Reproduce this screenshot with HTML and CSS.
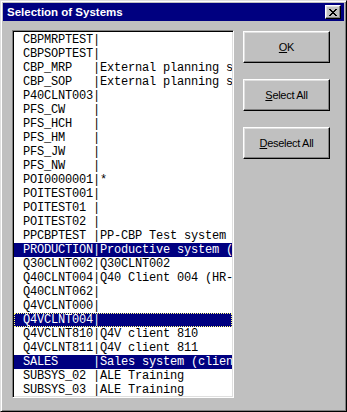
FILE: index.html
```html
<!DOCTYPE html>
<html>
<head>
<meta charset="utf-8">
<link rel="stylesheet" href="styles.css">
</head>
<body>
<div class="window">
  <div class="titlebar">
    <span class="title">Selection of Systems</span>
    <span class="close">
      <svg width="8" height="7" viewBox="0 0 8 7" shape-rendering="crispEdges">
        <path d="M0 0h2v1h-2z M6 0h2v1h-2z M1 1h2v1h-2z M5 1h2v1h-2z M2 2h4v1h-4z M3 3h2v1h-2z M2 4h4v1h-4z M1 5h2v1h-2z M5 5h2v1h-2z M0 6h2v1h-2z M6 6h2v1h-2z" fill="#000"/>
      </svg>
    </span>
  </div>
  <div class="content">
    <div class="listbox">
      <div class="row">CBPMRPTEST|</div>
      <div class="row">CBPSOPTEST|</div>
      <div class="row">CBP_MRP   |External planning system</div>
      <div class="row">CBP_SOP   |External planning system</div>
      <div class="row">P40CLNT003|</div>
      <div class="row">PFS_CW    |</div>
      <div class="row">PFS_HCH   |</div>
      <div class="row">PFS_HM    |</div>
      <div class="row">PFS_JW    |</div>
      <div class="row">PFS_NW    |</div>
      <div class="row">POI0000001|*</div>
      <div class="row">POITEST001|</div>
      <div class="row">POITEST01 |</div>
      <div class="row">POITEST02 |</div>
      <div class="row">PPCBPTEST |PP-CBP Test system</div>
      <div class="row sel">PRODUCTION|Productive system (client)</div>
      <div class="row">Q30CLNT002|Q30CLNT002</div>
      <div class="row">Q40CLNT004|Q40 Client 004 (HR-Test)</div>
      <div class="row">Q40CLNT062|</div>
      <div class="row">Q4VCLNT000|</div>
      <div class="row sel focus">Q4VCLNT004|</div>
      <div class="row">Q4VCLNT810|Q4V client 810</div>
      <div class="row">Q4VCLNT811|Q4V client 811</div>
      <div class="row sel">SALES     |Sales system (client)</div>
      <div class="row">SUBSYS_02 |ALE Training</div>
      <div class="row">SUBSYS_03 |ALE Training</div>
    </div>
    <div class="buttons">
      <div class="btn"><span><u>O</u>K</span></div>
      <div class="btn"><span><u>S</u>elect All</span></div>
      <div class="btn"><span><u>D</u>eselect All</span></div>
    </div>
  </div>
</div>
</body>
</html>
```
FILE: styles.css
```css
html, body {
  margin: 0;
  padding: 0;
  background: #c0c0c0;
}

.window {
  box-sizing: border-box;
  width: 347px;
  height: 412px;
  background: #c0c0c0;
  border: 1px solid;
  border-color: #dfdfdf #000 #000 #dfdfdf;
  box-shadow: inset 1px 1px #fff, inset -1px -1px #808080;
  padding: 2px;
  display: flex;
  flex-direction: column;
}

.titlebar {
  height: 18px;
  background: #000080;
  display: flex;
  align-items: center;
  justify-content: space-between;
  padding: 0 3px 0 4px;
}

.title {
  color: #fff;
  font-family: "Liberation Sans", Arial, sans-serif;
  font-weight: bold;
  font-size: 11.5px;
}

.close {
  box-sizing: border-box;
  width: 16px;
  height: 14px;
  background: #c0c0c0;
  border: 1px solid;
  border-color: #fff #000 #000 #fff;
  box-shadow: inset -1px -1px #808080, inset 1px 1px #dfdfdf;
  display: flex;
  align-items: center;
  justify-content: center;
}

.close svg {
  display: block;
  margin-left: -1px;
}

.content {
  display: flex;
  padding: 9px 0 0 9px;
  gap: 9px;
}

.listbox {
  box-sizing: border-box;
  width: 222px;
  height: 368px;
  background: #fff;
  border: 1px solid;
  border-color: #808080 #fff #fff #808080;
  box-shadow: inset 1px 1px #000, inset -1px -1px #dfdfdf;
  padding: 2px 1px 1px 1px;
  overflow: hidden;
}

.row {
  height: 14px;
  line-height: 14px;
  white-space: pre;
  overflow: hidden;
  font-family: "Liberation Mono", "Courier New", monospace;
  font-size: 12px;
  letter-spacing: -0.2px;
  color: #000;
  padding-left: 9px;
}

.row.sel {
  background: #000080;
  color: #fff;
}

.row.focus {
  outline: 1px dotted #ffff80;
  outline-offset: -1px;
}

.buttons {
  display: flex;
  flex-direction: column;
  gap: 16px;
  margin-top: 1px;
}

.btn {
  box-sizing: border-box;
  width: 87px;
  height: 32px;
  background: #c0c0c0;
  border: 1px solid;
  border-color: #fff #000 #000 #fff;
  box-shadow: inset -1px -1px #808080, inset 1px 1px #dfdfdf;
  display: flex;
  align-items: center;
  justify-content: center;
  font-family: "Liberation Sans", Arial, sans-serif;
  font-size: 11px;
  letter-spacing: -0.3px;
  color: #000;
}
```
